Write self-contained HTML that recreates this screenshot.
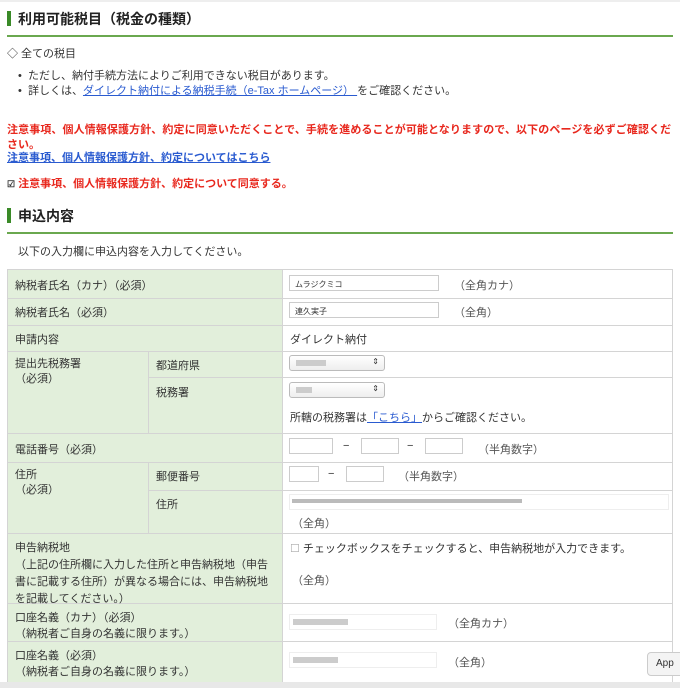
<!DOCTYPE html>
<html><head><meta charset="utf-8"><style>
*{margin:0;padding:0;box-sizing:border-box}
body{width:680px;height:688px;overflow:hidden;background:#fff;font-family:"Liberation Sans","Noto Sans CJK JP",sans-serif;font-size:11px;color:#333;position:relative}
.a{position:absolute;white-space:nowrap}
.h{font-size:14px;font-weight:bold;color:#222;padding-left:11px}
.h:before{content:"";position:absolute;left:0;top:2px;width:4px;height:15px;background:#3a8a28}
.rule{position:absolute;left:7px;width:666px;height:2px;background:#6aa84f}
.red{color:#e8281e;font-weight:bold}
a{color:#2a5bd0;text-decoration:underline}
.c{position:absolute;border:1px solid #d4d4d4;background:#e2efdb}
.w{background:#fff}
.in{position:absolute;border:1px solid #ccc;background:#fff;height:16px;font-size:8px;padding:3px 5px}
.bl{position:absolute;background:#ccc;height:6px}
.sel{position:absolute;border:1px solid #bbb;border-radius:3px;background:linear-gradient(#fff,#eee);height:16px;width:96px}
.sel:after{content:"⇕";position:absolute;right:5px;top:1px;font-size:8px}
</style></head><body>
<div style="position:absolute;left:0;top:0;width:680px;height:2px;background:#eee"></div>
<div class="a h" style="left:7px;top:9px">利用可能税目（税金の種類）</div>
<div class="rule" style="top:35px"></div>
<div class="a" style="left:7px;top:45px">◇ 全ての税目</div>
<div class="a" style="left:18px;top:67px">•&nbsp; ただし、納付手続方法によりご利用できない税目があります。</div>
<div class="a" style="left:18px;top:82px">•&nbsp; 詳しくは、<a>ダイレクト納付による納税手続（e-Tax ホームページ） </a> をご確認ください。</div>
<div class="a red" style="left:7px;top:121px;letter-spacing:0.1px">注意事項、個人情報保護方針、約定に同意いただくことで、手続を進めることが可能となりますので、以下のページを必ずご確認くだ</div>
<div class="a red" style="left:7px;top:136px">さい。</div>
<div class="a" style="left:7px;top:149px;font-weight:bold"><a>注意事項、個人情報保護方針、約定についてはこちら</a></div>
<div class="a red" style="left:7px;top:175px"><span style="font-size:9px;color:#333">☑</span> 注意事項、個人情報保護方針、約定について同意する。</div>
<div class="a h" style="left:7px;top:206px">申込内容</div>
<div class="rule" style="top:232px"></div>
<div class="a" style="left:18px;top:243px">以下の入力欄に申込内容を入力してください。</div>

<div class="c" style="left:7px;top:269px;width:276px;height:30px"></div><div class="c w" style="left:282px;top:269px;width:391px;height:30px"></div>
<div class="c" style="left:7px;top:298px;width:276px;height:28px"></div><div class="c w" style="left:282px;top:298px;width:391px;height:28px"></div>
<div class="c" style="left:7px;top:325px;width:276px;height:27px"></div><div class="c w" style="left:282px;top:325px;width:391px;height:27px"></div>
<div class="c" style="left:7px;top:351px;width:142px;height:83px"></div>
<div class="c" style="left:148px;top:351px;width:135px;height:27px"></div><div class="c w" style="left:282px;top:351px;width:391px;height:27px"></div>
<div class="c" style="left:148px;top:377px;width:135px;height:57px"></div><div class="c w" style="left:282px;top:377px;width:391px;height:57px"></div>
<div class="c" style="left:7px;top:433px;width:276px;height:30px"></div><div class="c w" style="left:282px;top:433px;width:391px;height:30px"></div>
<div class="c" style="left:7px;top:462px;width:142px;height:72px"></div>
<div class="c" style="left:148px;top:462px;width:135px;height:29px"></div><div class="c w" style="left:282px;top:462px;width:391px;height:29px"></div>
<div class="c" style="left:148px;top:490px;width:135px;height:44px"></div><div class="c w" style="left:282px;top:490px;width:391px;height:44px"></div>
<div class="c" style="left:7px;top:533px;width:276px;height:71px"></div><div class="c w" style="left:282px;top:533px;width:391px;height:71px"></div>
<div class="c" style="left:7px;top:603px;width:276px;height:39px"></div><div class="c w" style="left:282px;top:603px;width:391px;height:39px"></div>
<div class="c" style="left:7px;top:641px;width:276px;height:42px"></div><div class="c w" style="left:282px;top:641px;width:391px;height:42px"></div>

<div class="a" style="left:15px;top:277px">納税者氏名（カナ）（必須）</div>
<div class="in" style="left:289px;top:275px;width:150px">ムラジクミコ</div><div class="a" style="left:454px;top:277px;color:#555">（全角カナ）</div>
<div class="a" style="left:15px;top:304px">納税者氏名（必須）</div>
<div class="in" style="left:289px;top:302px;width:150px">連久実子</div><div class="a" style="left:454px;top:304px;color:#555">（全角）</div>
<div class="a" style="left:15px;top:331px">申請内容</div><div class="a" style="left:290px;top:331px">ダイレクト納付</div>
<div class="a" style="left:15px;top:357px;line-height:15px">提出先税務署<br>（必須）</div>
<div class="a" style="left:156px;top:357px">都道府県</div><div class="sel" style="left:289px;top:355px"></div><div class="bl" style="left:296px;top:360px;width:30px"></div>
<div class="a" style="left:156px;top:384px">税務署</div><div class="sel" style="left:289px;top:382px"></div><div class="bl" style="left:296px;top:387px;width:16px"></div>
<div class="a" style="left:290px;top:409px">所轄の税務署は<a>「こちら」</a>からご確認ください。</div>
<div class="a" style="left:15px;top:441px">電話番号（必須）</div>
<div class="in" style="left:289px;top:438px;width:44px"></div><div class="a" style="left:343px;top:440px">−</div>
<div class="in" style="left:361px;top:438px;width:38px"></div><div class="a" style="left:407px;top:440px">−</div>
<div class="in" style="left:425px;top:438px;width:38px"></div><div class="a" style="left:478px;top:441px;color:#555">（半角数字）</div>
<div class="a" style="left:15px;top:468px;line-height:15px">住所<br>（必須）</div>
<div class="a" style="left:156px;top:468px">郵便番号</div>
<div class="in" style="left:289px;top:466px;width:30px"></div><div class="a" style="left:328px;top:468px">−</div>
<div class="in" style="left:346px;top:466px;width:38px"></div><div class="a" style="left:398px;top:468px;color:#555">（半角数字）</div>
<div class="a" style="left:156px;top:496px">住所</div>
<div class="in" style="left:289px;top:494px;width:380px;border-color:#eee"></div><div class="bl" style="left:292px;top:499px;width:230px;background:#bbb;height:4px"></div>
<div class="a" style="left:292px;top:515px;color:#555">（全角）</div>
<div class="a" style="left:15px;top:540px;line-height:17px">申告納税地<br>（上記の住所欄に入力した住所と申告納税地（申告<br>書に記載する住所）が異なる場合には、申告納税地<br>を記載してください。）</div>
<div class="a" style="left:290px;top:540px"><span style="color:#aaa">☐</span> チェックボックスをチェックすると、申告納税地が入力できます。</div>
<div class="a" style="left:292px;top:572px;color:#555">（全角）</div>
<div class="a" style="left:15px;top:610px;line-height:16px">口座名義（カナ）（必須）<br>（納税者ご自身の名義に限ります。）</div>
<div class="in" style="left:289px;top:614px;width:148px;border-color:#eee"></div><div class="bl" style="left:293px;top:619px;width:55px;background:#ccc"></div>
<div class="a" style="left:448px;top:615px;color:#555">（全角カナ）</div>
<div class="a" style="left:15px;top:648px;line-height:16px">口座名義（必須）<br>（納税者ご自身の名義に限ります。）</div>
<div class="in" style="left:289px;top:652px;width:148px;border-color:#eee"></div><div class="bl" style="left:293px;top:657px;width:45px;background:#ccc"></div>
<div class="a" style="left:448px;top:654px;color:#555">（全角）</div>
<div style="position:absolute;left:0;top:682px;width:680px;height:6px;background:#e8e8e8"></div>
<div class="a" style="left:647px;top:652px;width:40px;height:24px;background:#f4f4f4;border:1px solid #ccc;border-radius:4px;padding:5px 0 0 8px;font-size:10px">App</div>
</body></html>
